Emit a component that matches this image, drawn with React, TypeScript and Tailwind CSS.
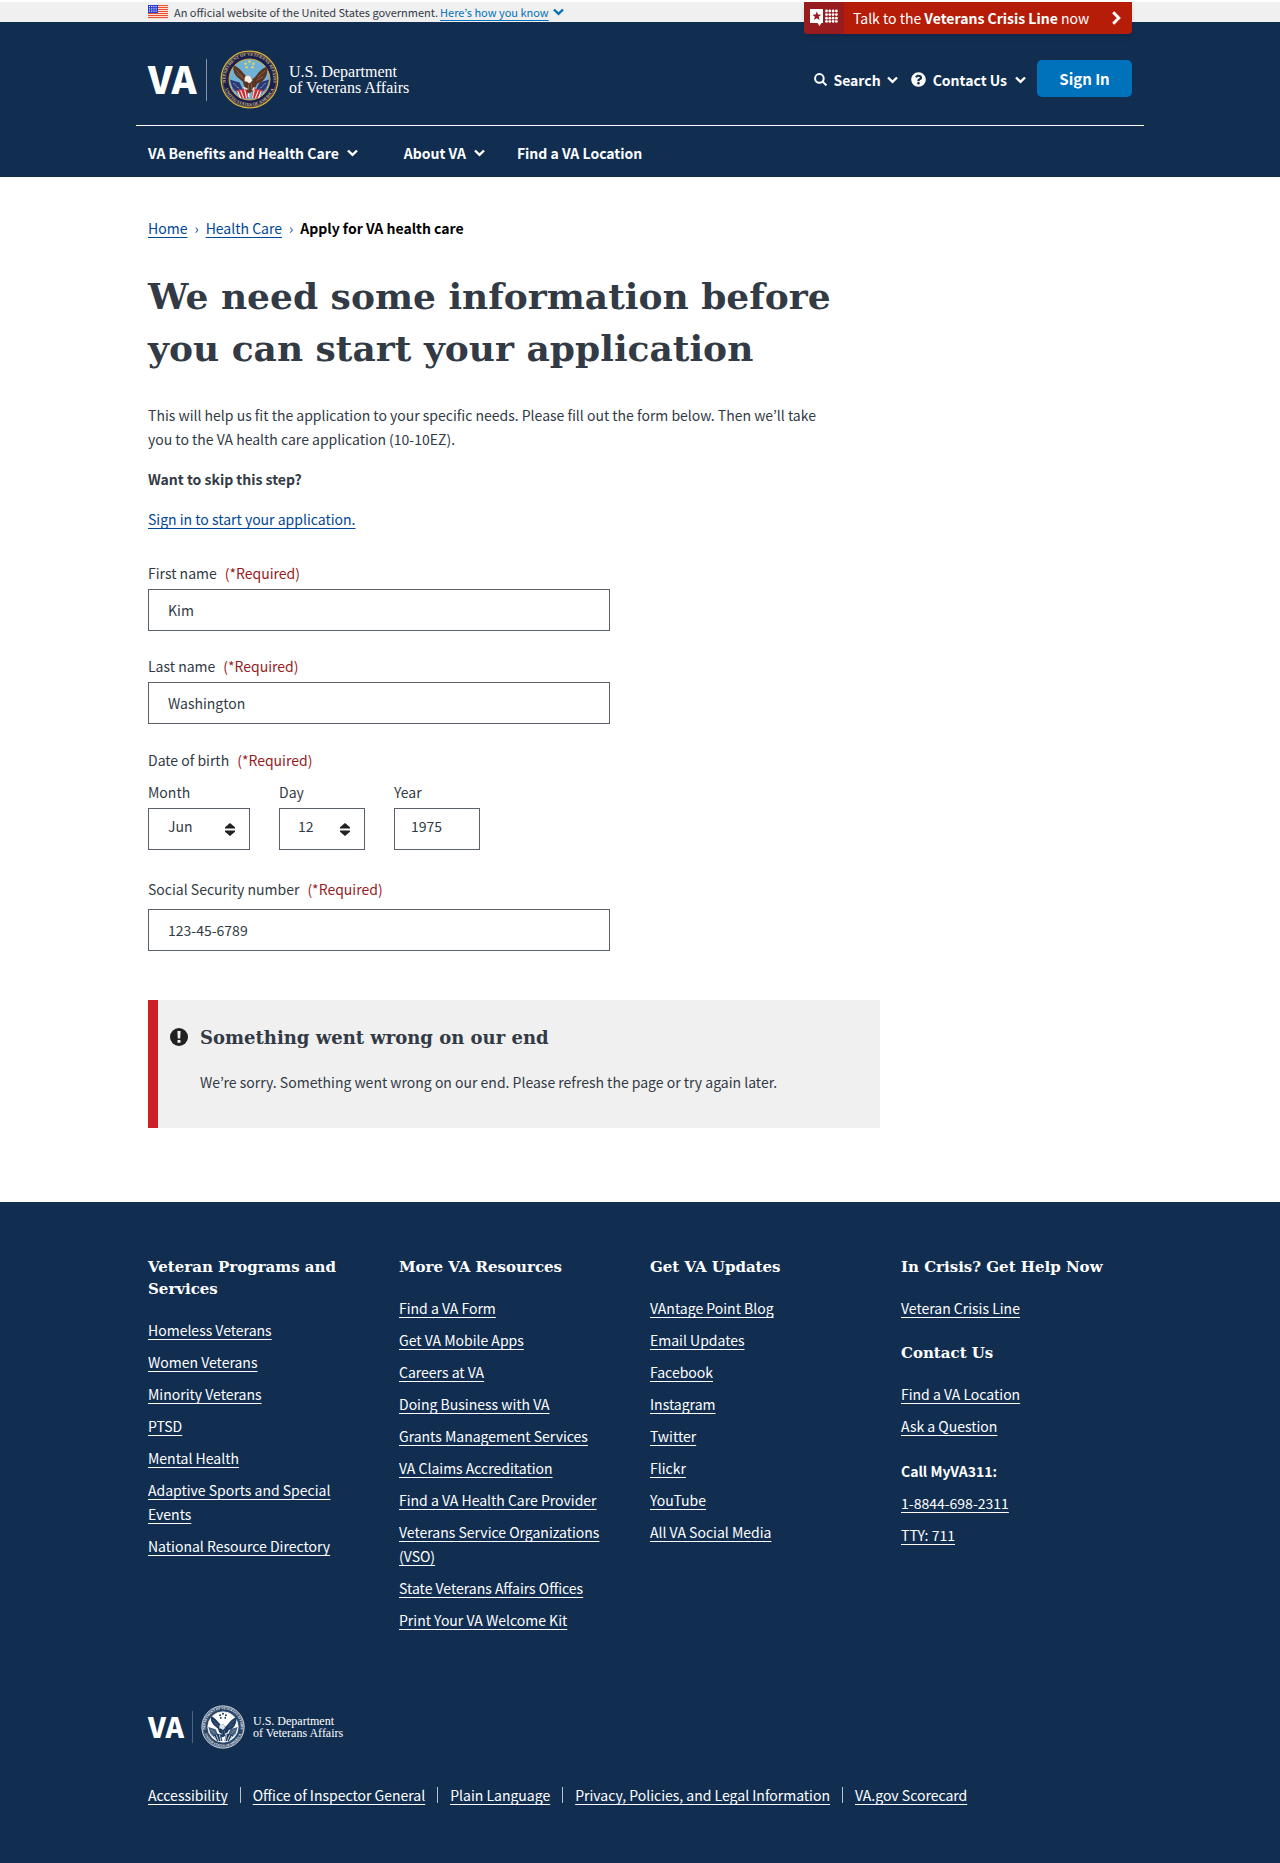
import { useId, type ReactNode } from "react";

const sans = "font-['Noto_Sans_CJK_KR',sans-serif]";
const slab = "font-['DejaVu_Serif',serif]";

type LinkGroup = { title: string; links: string[] };

const footerGroups: LinkGroup[] = [
  {
    title: "Veteran Programs and Services",
    links: [
      "Homeless Veterans",
      "Women Veterans",
      "Minority Veterans",
      "PTSD",
      "Mental Health",
      "Adaptive Sports and Special Events",
      "National Resource Directory",
    ],
  },
  {
    title: "More VA Resources",
    links: [
      "Find a VA Form",
      "Get VA Mobile Apps",
      "Careers at VA",
      "Doing Business with VA",
      "Grants Management Services",
      "VA Claims Accreditation",
      "Find a VA Health Care Provider",
      "Veterans Service Organizations (VSO)",
      "State Veterans Affairs Offices",
      "Print Your VA Welcome Kit",
    ],
  },
  {
    title: "Get VA Updates",
    links: [
      "VAntage Point Blog",
      "Email Updates",
      "Facebook",
      "Instagram",
      "Twitter",
      "Flickr",
      "YouTube",
      "All VA Social Media",
    ],
  },
];

const legalLinks = [
  "Accessibility",
  "Office of Inspector General",
  "Plain Language",
  "Privacy, Policies, and Legal Information",
  "VA.gov Scorecard",
];

function Chevron({ className = "h-2 w-[11px]" }: { className?: string }) {
  return (
    <svg viewBox="0 0 11 8" className={className} fill="none" stroke="currentColor" strokeWidth="2.4" aria-hidden="true">
      <path d="M1 1.5 5.5 5.8 10 1.5" />
    </svg>
  );
}

function Flag() {
  return (
    <svg viewBox="0 0 20 14" className="h-3.5 w-5" aria-hidden="true">
      <rect width="20" height="14" fill="#fff" />
      {[0, 2, 4, 6, 8, 10, 12].map((y) => (
        <rect key={y} y={y} width="20" height="1.2" fill="#e8532f" />
      ))}
      <rect width="10" height="8" fill="#2b3bd0" />
      {[1, 3.3, 5.6].map((y) =>
        [1, 3.2, 5.4, 7.6].map((x) => <rect key={`${x}-${y}`} x={x} y={y} width="1.1" height="1.1" fill="#fff" />),
      )}
    </svg>
  );
}

function Eagle({ dark, light, flag, accent }: { dark: string; light: string; flag: string; accent: string }) {
  return (
    <>
      <path d="M-20 0 L-10 3 -6 12 -10 16 -17 10Z M20 0 L10 3 6 12 10 16 17 10Z" fill={flag} />
      <path d="M-16 4l8 8M-18 8l6 6M16 4l-8 8M18 8l-6 6" stroke={light} strokeWidth="0.9" strokeDasharray="1.2 1.4" />
      <path d="M-14 11 -2 9 -1 19 -8 19Z M14 11 4 9 2 19 8 19Z" fill={accent} />
      <path d="M-12 12l3 7M-9 11l3 8M-5 10l2 9M12 12l-3 7M9 11l-3 8M5 10l-2 9" stroke={light} strokeWidth="1.1" />
      <path
        d="M-16 -14.500 C-17 -11 -16.500 -6 -12 -2 L-7 2 -5 8 -2 13 0 14 3 12 6 8 8 4 13 2 C17 -2 19 -7 18 -13 C14 -12 10 -9 7 -4 L3 0 0 -4 -3 -3 -6 -6 C-9 -10 -12 -13 -16 -14.500Z"
        fill={dark}
      />
      <path d="M-14 -10l7 7M-13 -6l7 5M16 -9l-8 7M14 -3l-7 4M-1 5v6M2 4v6" stroke={light} strokeOpacity="0.3" strokeWidth="0.8" />
      <path d="M-5 -1 C-5 -4 -1 -5 1 -3 L3 1 0 4 -3 2 -5 2Z" fill={light} />
      <path d="M-6 8 -2 10M5 8 3 11M-1 14v4" stroke={light} strokeWidth="1.5" />
    </>
  );
}

function Seal({ mono = false, className }: { mono?: boolean; className: string }) {
  const id = useId();
  const field = mono ? "#fff" : "#6fb2d6";
  const ring = mono ? "#2b4567" : "#1c1f4e";
  const gold = mono ? "#dfe5ec" : "#d8b13c";
  return (
    <svg viewBox="-30 -30 60 60" className={className} role="img" aria-label="Seal of the U.S. Department of Veterans Affairs">
      <defs>
        <path id={`${id}t`} d="M-22.6 9 A24.3 24.3 0 1 1 22.6 9" />
        <path id={`${id}b`} d="M-25 9.5 A26.7 26.7 0 0 0 25 9.5" />
      </defs>
      <circle r="28.8" fill={ring} stroke={gold} strokeWidth="1.3" />
      <circle r="27.4" fill="none" stroke={gold} strokeWidth="0.4" />
      <circle r="20.8" fill={field} stroke={gold} strokeWidth="1" />
      <g fill={mono ? "#fff" : "#c9b680"} fontFamily="Liberation Serif, serif" fontWeight="700" fontSize="4.4" textAnchor="middle">
        <text><textPath href={`#${id}t`} startOffset="50%">DEPARTMENT OF VETERANS AFFAIRS</textPath></text>
        <text><textPath href={`#${id}b`} startOffset="50%">UNITED STATES OF AMERICA</textPath></text>
      </g>
      <g fill={mono ? "#112e51" : "#e3d35c"}>
        <circle cx="0" cy="-18" r="1.3" />
        <circle cx="-4" cy="-16" r="1.3" />
        <circle cx="4" cy="-16" r="1.3" />
        <circle cx="-3" cy="-12.5" r="1.3" />
        <circle cx="3" cy="-12.5" r="1.3" />
      </g>
      <Eagle
        dark={mono ? "#1d395f" : "#5b3521"}
        light={mono ? "#dfe5ec" : "#f3ede6"}
        flag={mono ? "#46607f" : "#2c3b78"}
        accent={mono ? "#1d395f" : "#c6303a"}
      />
    </svg>
  );
}

function Required() {
  return <span className="ml-2 text-[#981b1e]">(*Required)</span>;
}

function TextField({ label, value, className, labelClass }: { label: string; value: string; className: string; labelClass: string }) {
  const id = useId();
  return (
    <div className={className}>
      <label htmlFor={id} className={labelClass}>
        {label}
        <Required />
      </label>
      <input
        id={id}
        type="text"
        defaultValue={value}
        className="block h-[42px] w-full max-w-[462px] border border-[#5b616b] bg-white px-[19px] text-[#323a45]"
      />
    </div>
  );
}

function DateSelect({ label, value, className, pad }: { label: string; value: string; className: string; pad: string }) {
  const id = useId();
  return (
    <div className={className}>
      <label htmlFor={id} className="block pb-1">
        {label}
      </label>
      <div className="relative">
        <select
          id={id}
          defaultValue={value}
          className={`block h-[42px] w-full appearance-none border border-[#5b616b] bg-white pb-1.5 text-[#323a45] ${pad}`}
        >
          <option>{value}</option>
        </select>
        <svg viewBox="0 0 10 13" className="pointer-events-none absolute top-[15px] right-[15px] h-[13px] w-2.5" fill="#212121" aria-hidden="true">
          <path d="M5 0 10 4.2V5.4H0V4.2Z M5 13 10 8.8V7.6H0V8.8Z" />
        </svg>
      </div>
    </div>
  );
}

function FooterHeading({ children }: { children: ReactNode }) {
  return <h2 className={`text-[15px] leading-[22px] font-bold ${slab}`}>{children}</h2>;
}

function FooterLinks({ links }: { links: string[] }) {
  return (
    <ul className="space-y-2 pt-[18px] pr-4">
      {links.map((text) => (
        <li key={text}>
          <a href="#" className="underline underline-offset-[3px]">
            {text}
          </a>
        </li>
      ))}
    </ul>
  );
}

function Header() {
  return (
    <header>
      <div className="mt-0.5 bg-[#f0f0f0]">
        <div className="relative mx-auto flex h-5 max-w-[984px] items-center">
          <Flag />
          <span className="ml-1.5 text-[11px] leading-5 text-[#323a45]">An official website of the United States government.</span>
          <button type="button" className="ml-0.5 flex items-center gap-1 text-[11px] leading-5 text-[#0071bb]">
            <span className="underline underline-offset-[3px]">Here’s how you know</span>
            <Chevron />
          </button>
          <a href="#" className="absolute top-0 right-0 flex h-8 w-[328px] items-center rounded-b-sm bg-[#b51d09] text-white shadow-md">
            <span className="flex h-8 w-10 items-center justify-center rounded-bl-sm bg-[#981b1e]">
              <svg viewBox="0 0 28 18" className="h-[18px] w-7" aria-hidden="true">
                <path d="M0 0H13V14H11.5L9.5 17 7.5 14H0Z" fill="#fff" />
                <path d="m6.8 2.6 1.2 3 3.2.2-2.5 2 .9 3.2-2.8-1.8L4 11l.9-3.2-2.5-2 3.2-.2z" fill="#981b1e" />
                {[2, 5.6, 9.2, 12.4].map((y) =>
                  [16.5, 19.8, 23.1, 26.4].map((x) => <circle key={`${x}-${y}`} cx={x} cy={y} r="1.4" fill="#fff" />),
                )}
              </svg>
            </span>
            <span className="ml-[9px]">
              Talk to the <strong>Veterans Crisis Line</strong> now
            </span>
            <svg viewBox="0 0 9 14" className="mr-[11px] ml-auto h-3.5 w-[9px]" fill="none" stroke="#fff" strokeWidth="3" aria-hidden="true">
              <path d="M1.2 1.2 6.8 7 1.2 12.8" />
            </svg>
          </a>
        </div>
      </div>

      <div className="bg-[#112e51] text-white">
        <div className="mx-auto max-w-[1008px]">
          <div className="flex items-center justify-between border-b border-white px-3 pt-7 pb-4">
            <a href="#" className="flex items-center">
              <span className="w-[47px] pb-1 text-[38px] leading-10 font-black">VA</span>
              <span className="ml-[11px] h-[42px] w-px bg-[#8895a8]" />
              <Seal className="ml-[13px] size-[59px]" />
              <span className="ml-[10px] font-['Liberation_Serif',serif] text-base leading-4">
                U.S. Department
                <br />
                of Veterans Affairs
              </span>
            </a>
            <div className="flex items-center pb-0.5 font-bold">
              <button type="button" className="flex items-center pt-0.5">
                <svg viewBox="0 0 13 13" className="mr-1.5 size-[13px]" fill="none" stroke="currentColor" strokeWidth="2" aria-hidden="true">
                  <circle cx="5.4" cy="5.4" r="4.3" />
                  <path d="M8.4 8.4 12.4 12.4" />
                </svg>
                Search
                <Chevron className="ml-1.5 h-2 w-[11px]" />
              </button>
              <button type="button" className="ml-[13px] flex items-center pt-0.5">
                <svg viewBox="0 0 512 512" className="mr-[7px] size-[15px]" fill="currentColor" aria-hidden="true">
                  <path d="M504 256c0 137-111 248-248 248S8 393 8 256 119 8 256 8s248 111 248 248zM262.700 90c-54.500 0-89.300 23-116.500 63.800-3.500 5.300-2.400 12.400 2.700 16.300l34.700 26.300c5.200 3.900 12.600 3 16.700-2.100 17.900-22.700 30.100-35.800 57.300-35.800 20.400 0 45.700 13.100 45.700 33 0 15-12.400 22.700-32.500 34C247.100 238.500 216 254.900 216 296v4c0 6.600 5.400 12 12 12h56c6.600 0 12-5.400 12-12v-1.300c0-28.500 83.200-29.600 83.200-106.700 0-58-60.200-102-116.500-102zM256 338c-25.400 0-46 20.600-46 46s20.600 46 46 46 46-20.600 46-46-20.600-46-46-46z" />
                </svg>
                Contact Us
                <Chevron className="ml-2 h-2 w-[11px]" />
              </button>
              <button type="button" className="ml-[11px] h-[37px] w-[95px] rounded-[5px] bg-[#0071bb] text-[15px] font-bold">
                Sign In
              </button>
            </div>
          </div>
          <nav className="flex h-[51px] items-center gap-x-8 px-3 pt-0.5 font-bold">
            <button type="button" className="mr-3.5 flex items-center gap-2">
              VA Benefits and Health Care <Chevron />
            </button>
            <button type="button" className="flex items-center gap-2">
              About VA <Chevron />
            </button>
            <a href="#">Find a VA Location</a>
          </nav>
        </div>
      </div>
    </header>
  );
}

function Main() {
  const year = useId();
  return (
    <main className="mx-auto max-w-[984px] pt-[39px] pb-[74px]">
      <nav aria-label="Breadcrumb" className="flex gap-[7px] text-[#004795]">
        <a href="#" className="underline underline-offset-[3px]">Home</a>
        <span>›</span>
        <a href="#" className="underline underline-offset-[3px]">Health Care</a>
        <span>›</span>
        <span className="font-bold text-black">Apply for VA health care</span>
      </nav>

      <div className="max-w-[732px]">
        <h1 className={`mt-[30px] text-4xl leading-[52px] font-bold ${slab}`}>
          We need some information before you can start your application
        </h1>
        <p className="mt-[29px] max-w-[690px]">
          This will help us fit the application to your specific needs. Please fill out the form below. Then we’ll take you to the VA health care
          application (10-10EZ).
        </p>
        <p className="mt-4 font-bold">Want to skip this step?</p>
        <p className="mt-4">
          <a href="#" className="text-[#004795] underline underline-offset-[3px]">Sign in to start your application.</a>
        </p>

        <form>
          <TextField label="First name" value="Kim" className="mt-[30px]" labelClass="block pb-1" />
          <TextField label="Last name" value="Washington" className="mt-[23px]" labelClass="block pb-1" />
          <fieldset className="mt-6">
            <legend>
              Date of birth
              <Required />
            </legend>
            <div className="mt-2 flex gap-[29px]">
              <DateSelect label="Month" value="Jun" className="w-[102px]" pad="pl-[19px]" />
              <DateSelect label="Day" value="12" className="w-[86px]" pad="pl-[18px]" />
              <div className="w-[86px]">
                <label htmlFor={year} className="block pb-1">
                  Year
                </label>
                <input
                  id={year}
                  type="text"
                  defaultValue="1975"
                  className="block h-[42px] w-full border border-[#5b616b] bg-white px-4 pb-1.5 text-[#323a45]"
                />
              </div>
            </div>
          </fieldset>
          <TextField label="Social Security number" value="123-45-6789" className="mt-[27px]" labelClass="block pb-2" />
        </form>

        <div role="alert" className="mt-[49px] flex border-l-[10px] border-[#cd2026] bg-[#f0f0f0] pt-6 pr-5 pb-[34px] pl-3">
          <svg viewBox="0 0 18 18" className="mt-1 size-[18px] shrink-0" aria-hidden="true">
            <circle cx="9" cy="9" r="9" fill="#212121" />
            <path d="M7.400 3H10.600L10.200 10.600H7.800Z M7.500 12H10.500V14.800H7.500Z" fill="#f0f0f0" />
          </svg>
          <div className="ml-3">
            <h2 className={`text-lg leading-7 font-bold ${slab}`}>Something went wrong on our end</h2>
            <p className="mt-[18px]">We’re sorry. Something went wrong on our end. Please refresh the page or try again later.</p>
          </div>
        </div>
      </div>
    </main>
  );
}

function Footer() {
  return (
    <footer className="bg-[#112e51] text-white">
      <div className="mx-auto max-w-[984px] pt-[54px] pb-[57px]">
        <div className="grid grid-cols-4 gap-x-5">
          {footerGroups.map((group) => (
            <section key={group.title}>
              <FooterHeading>{group.title}</FooterHeading>
              <FooterLinks links={group.links} />
            </section>
          ))}
          <section>
            <FooterHeading>In Crisis? Get Help Now</FooterHeading>
            <FooterLinks links={["Veteran Crisis Line"]} />
            <div className="mt-[22px]">
              <FooterHeading>Contact Us</FooterHeading>
            </div>
            <FooterLinks links={["Find a VA Location", "Ask a Question"]} />
            <h3 className="mt-[21px] -mb-2.5 font-bold">Call MyVA311:</h3>
            <FooterLinks links={["1-8844-698-2311", "TTY: 711"]} />
          </section>
        </div>

        <a href="#" className="mt-[73px] inline-flex items-center">
          <span className="w-9 pb-0.5 text-[28px] leading-8 font-black">VA</span>
          <span className="ml-2 h-8 w-px bg-[#4d6480]" />
          <Seal mono className="ml-2 size-11" />
          <span className="ml-2 font-['Liberation_Serif',serif] text-xs leading-3">
            U.S. Department
            <br />
            of Veterans Affairs
          </span>
        </a>

        <ul className="mt-[34px] flex flex-wrap">
          {legalLinks.map((text, i) => (
            <li key={text} className="flex">
              {i > 0 && <span className="mx-3 my-1 w-px bg-[#b8c1cc]" />}
              <a href="#" className="underline underline-offset-[3px]">
                {text}
              </a>
            </li>
          ))}
        </ul>
      </div>
    </footer>
  );
}

export default function App() {
  return (
    <div className={`flow-root bg-white text-sm leading-6 text-[#323a45] ${sans}`}>
      <Header />
      <Main />
      <Footer />
    </div>
  );
}
